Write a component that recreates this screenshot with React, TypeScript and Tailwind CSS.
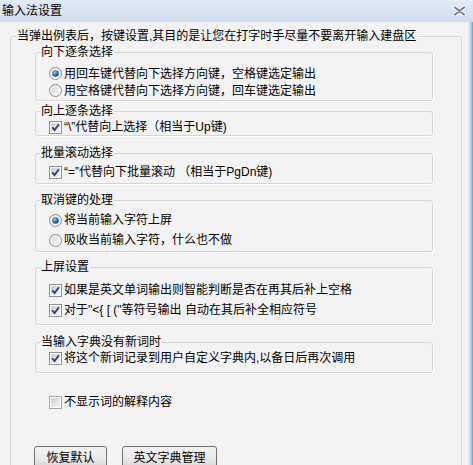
import type { ReactNode } from "react";

const Radio = ({ checked }: { checked?: boolean }) => (
  <svg width="13" height="13" viewBox="0 0 13 13" className="shrink-0">
    <defs>
      <linearGradient id="radioFill" x1="0" y1="0" x2="1" y2="1">
        <stop offset="0" stopColor="#d6d6d6" />
        <stop offset="1" stopColor="#fbfbfb" />
      </linearGradient>
      <radialGradient id="radioDot" cx="0.4" cy="0.35" r="0.7">
        <stop offset="0" stopColor="#9fd0f5" />
        <stop offset="0.55" stopColor="#2c6fb5" />
        <stop offset="1" stopColor="#143d70" />
      </radialGradient>
    </defs>
    <circle cx="6.5" cy="6.5" r="6" fill="url(#radioFill)" stroke="#8c8f92" />
    <circle cx="6.5" cy="6.5" r="4.6" fill="none" stroke="#ffffff" strokeOpacity="0.7" />
    {checked && <circle cx="6.5" cy="6.5" r="3.2" fill="url(#radioDot)" />}
  </svg>
);

const Check = ({ checked }: { checked?: boolean }) => (
  <svg width="13" height="13" viewBox="0 0 13 13" className="shrink-0">
    <defs>
      <linearGradient id="checkFill" x1="0" y1="0" x2="1" y2="1">
        <stop offset="0" stopColor="#c9ccd1" />
        <stop offset="1" stopColor="#f7f7f7" />
      </linearGradient>
    </defs>
    <rect x="0.5" y="0.5" width="12" height="12" fill="#ffffff" stroke={checked ? "#8e8f8f" : "#a8a8a8"} />
    <rect x="2" y="2" width="9" height="9" fill="url(#checkFill)" />
    {checked && (
      <path d="M3.2 6.4 5.6 9 9.9 3.3" fill="none" stroke="#2f4270" strokeWidth="1.9" />
    )}
  </svg>
);

const Group = ({ title, className, children }: { title: string; className: string; children: ReactNode }) => (
  <fieldset
    className={`ml-[24px] w-[398px] rounded-[3px] border border-[#d5d5d5] shadow-[1px_1px_0_#ffffff] ${className}`}
  >
    <legend className="ml-[4px] px-[1px] leading-[14px]">{title}</legend>
    {children}
  </fieldset>
);

const Row = ({ className, children }: { className: string; children: ReactNode }) => (
  <div className={`flex items-center pl-[13px] ${className}`}>{children}</div>
);

const Label = ({ children }: { children: ReactNode }) => (
  <span className="ml-[2px] whitespace-pre">{children}</span>
);

const App = () => {
  return (
    <div className="w-[473px] h-[465px] overflow-hidden bg-[#f3f3f3] text-[12px] leading-[14px] text-black font-['Liberation_Sans','Noto_Sans_CJK_SC',sans-serif]">
      {/* Title bar */}
      <div className="h-[22px] flex items-center justify-between pl-[2px] pr-[7px] bg-linear-to-b from-[#e2ebf6] to-[#cfdded]">
        <span className="text-[12px]">输入法设置</span>
        <svg width="13" height="10" viewBox="0 0 13 10">
          <path d="M2 1.5 11 8.5M11 1.5 2 8.5" stroke="#ffffff" strokeWidth="4.2" strokeLinecap="round" />
          <path d="M2 1.5 11 8.5M11 1.5 2 8.5" stroke="#7f789f" strokeWidth="2.2" strokeLinecap="round" />
        </svg>
      </div>

      <div className="flex h-[443px]">
        <div className="w-[468px] overflow-hidden">
          {/* Outer group */}
          <fieldset className="ml-[10px] mt-[7px] w-[452px] h-[450px] rounded-[3px] border border-[#d5d5d5] shadow-[1px_1px_0_#ffffff] pt-[2px]">
            <legend className="ml-[5px] px-[1px] leading-[14px]">
              当弹出例表后，按键设置,其目的是让您在打字时手尽量不要离开输入建盘区
            </legend>

            <Group title="向下逐条选择" className="h-[56px] pt-[6px]">
              <Row className="h-[17px]">
                <Radio checked />
                <Label>用回车键代替向下选择方向键，空格键选定输出</Label>
              </Row>
              <Row className="h-[17px]">
                <Radio />
                <Label>用空格键代替向下选择方向键，回车键选定输出</Label>
              </Row>
            </Group>

            <Group title="向上逐条选择" className="mt-[3px] h-[32px]">
              <Row className="h-[18px]">
                <Check checked />
                <Label>“\”代替向上选择（相当于Up键)</Label>
              </Row>
            </Group>

            <Group title="批量滚动选择" className="mt-[10px] h-[38px] pt-[2px]">
              <Row className="h-[20px]">
                <Check checked />
                <Label>“=”代替向下批量滚动 （相当于PgDn键)</Label>
              </Row>
            </Group>

            <Group title="取消键的处理" className="mt-[9px] h-[59px] pt-[3px]">
              <Row className="h-[20px]">
                <Radio checked />
                <Label>将当前输入字符上屏</Label>
              </Row>
              <Row className="h-[20px]">
                <Radio />
                <Label>吸收当前输入字符，什么也不做</Label>
              </Row>
            </Group>

            <Group title="上屏设置" className="mt-[8px] h-[65px] pt-[6px]">
              <Row className="h-[20px]">
                <Check checked />
                <Label>如果是英文单词输出则智能判断是否在再其后补上空格</Label>
              </Row>
              <Row className="h-[20px]">
                <Check checked />
                <Label>对于"&lt;{"{"} [ ("等符号输出 自动在其后补全相应符号</Label>
              </Row>
            </Group>

            <Group title="当输入字典没有新词时" className="mt-[10px] h-[38px]">
              <Row className="h-[18px]">
                <Check checked />
                <Label>将这个新词记录到用户自定义字典内,以备日后再次调用</Label>
              </Row>
            </Group>

            <div className="mt-[19px] h-[20px] flex items-center pl-[38px]">
              <Check />
              <Label>不显示词的解释内容</Label>
            </div>

            <div className="mt-[34px] flex pl-[23px] gap-[15px]">
              <button className="w-[73px] h-[23px] rounded-[3px] border border-[#707070] bg-linear-to-b from-[#f2f2f2] via-[#ebebeb] to-[#d6d6d6] text-[12px]">
                恢复默认
              </button>
              <button className="w-[95px] h-[23px] rounded-[3px] border border-[#707070] bg-linear-to-b from-[#f2f2f2] via-[#ebebeb] to-[#d6d6d6] text-[12px]">
                英文字典管理
              </button>
            </div>
          </fieldset>
        </div>

        {/* Window frame, right edge */}
        <div className="w-[5px] bg-linear-to-r from-[#e6f2fa] via-[#b9dbef] to-[#5c9ed2]" />
      </div>
    </div>
  );
};

export default App;
